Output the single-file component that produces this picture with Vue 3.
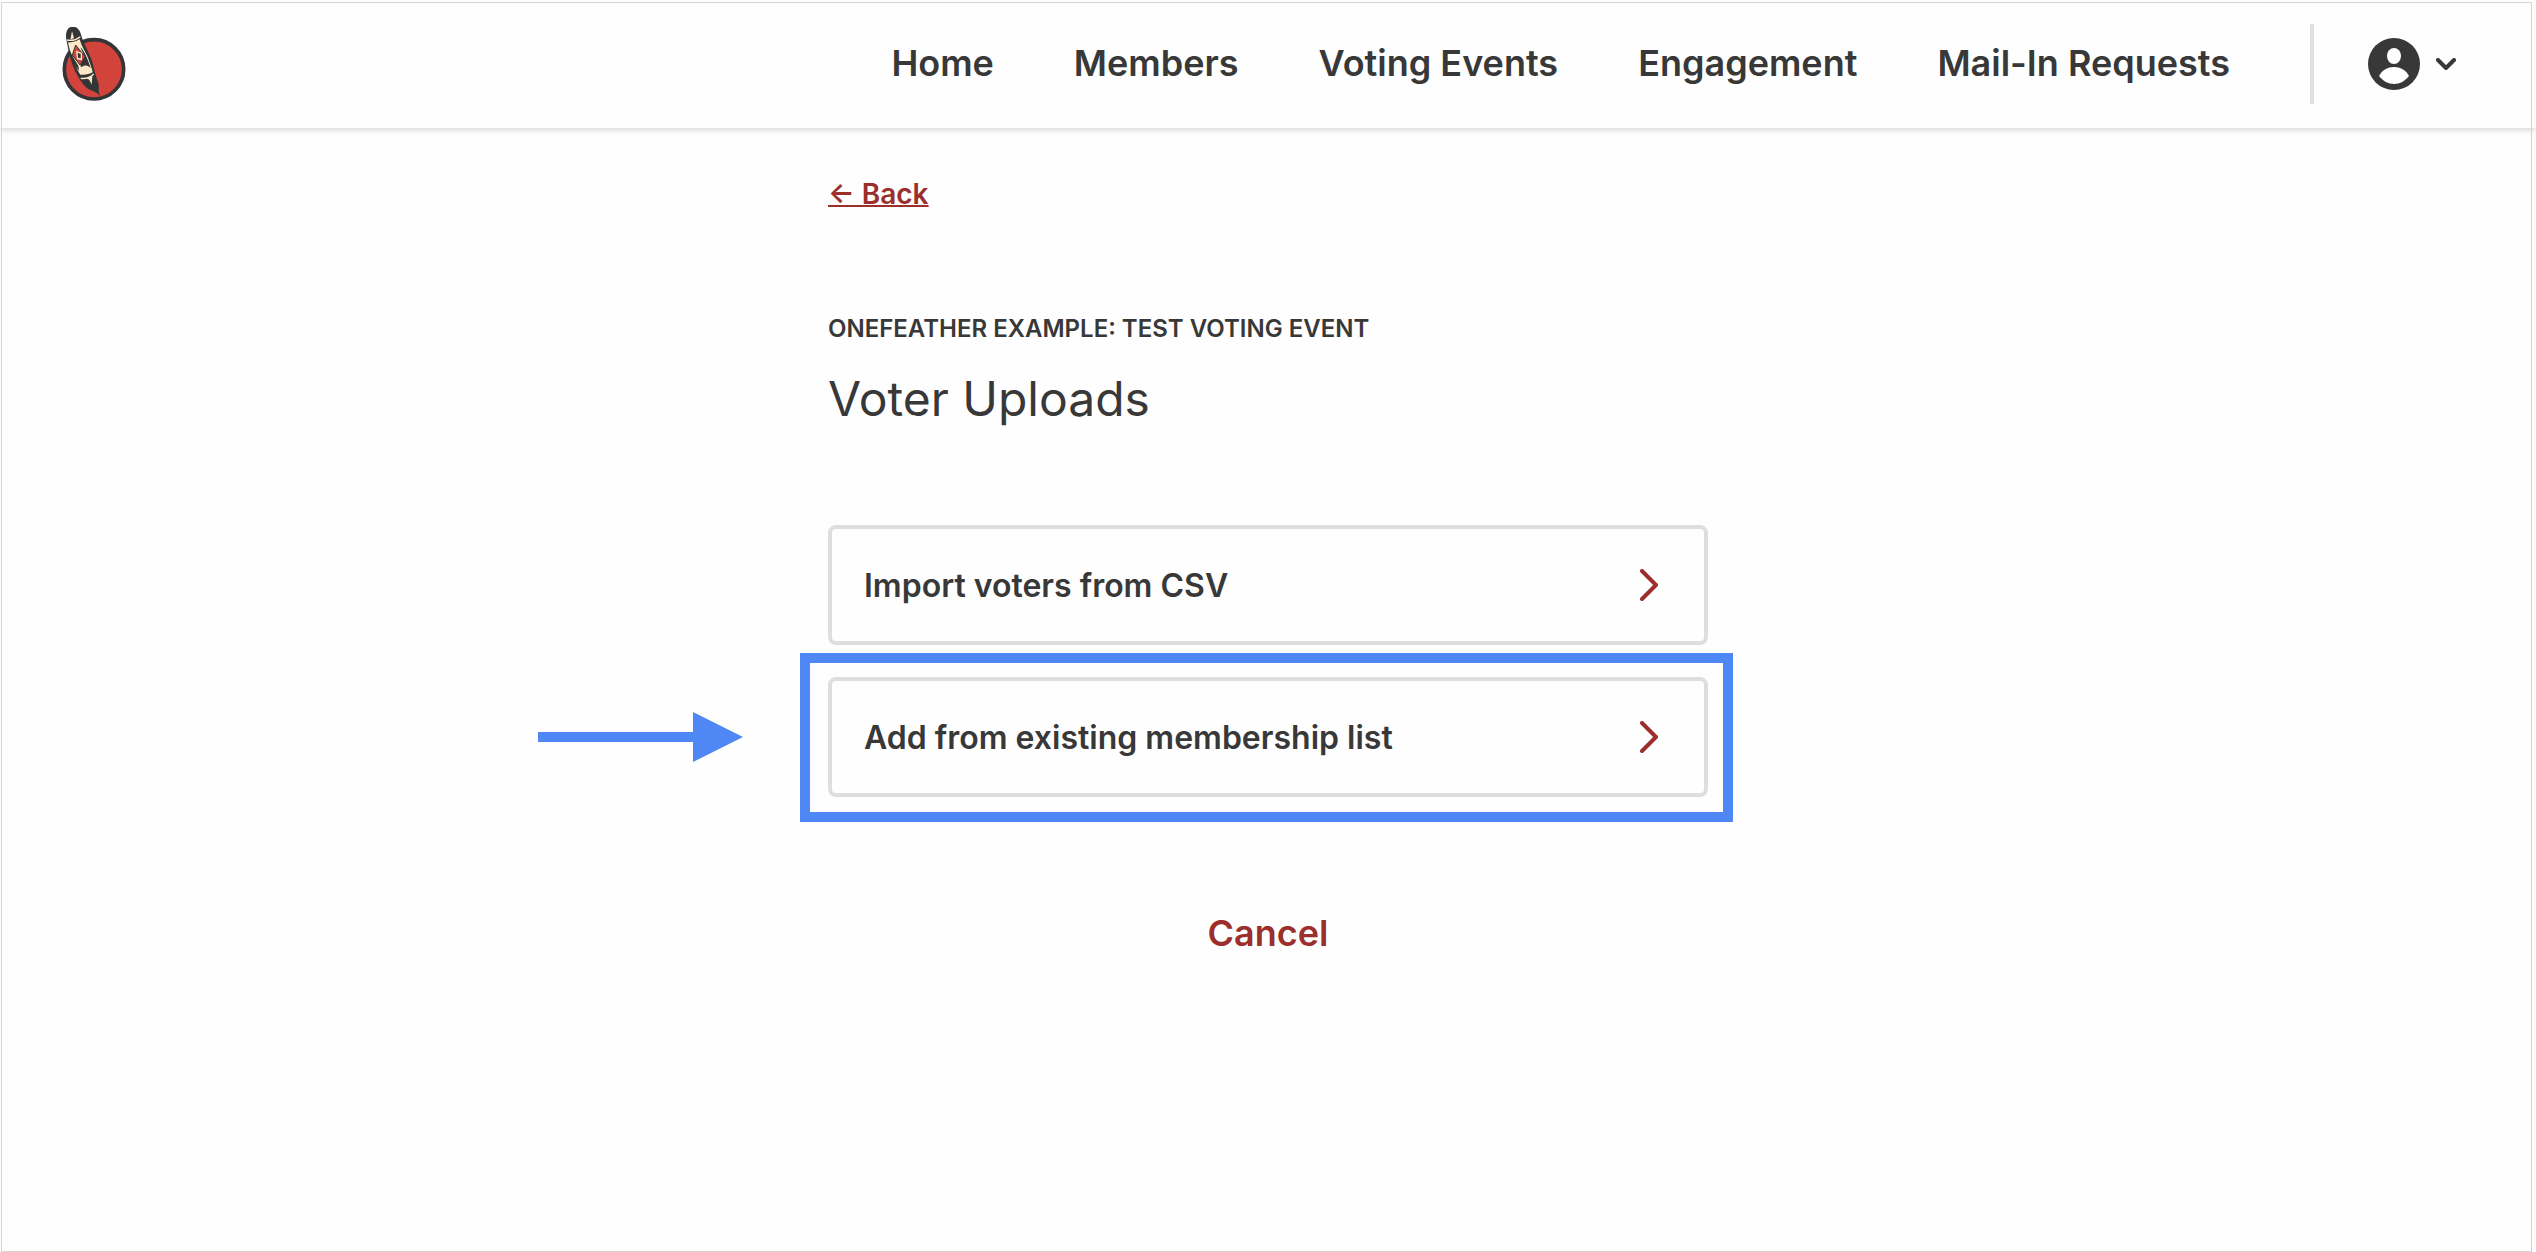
<script setup>
const links = ['Home', 'Members', 'Voting Events', 'Engagement', 'Mail-In Requests']
const options = [
  { label: 'Import voters from CSV', highlighted: false },
  { label: 'Add from existing membership list', highlighted: true },
]
</script>

<template>
  <div class="page">
    <header class="topbar">
      <a href="#" class="logo" aria-label="OneFeather home">
        <svg viewBox="35 37 192 225" width="64" height="75" aria-hidden="true">
          <circle cx="131" cy="164" r="89" fill="#d2433b" stroke="#343536" stroke-width="11" />
          <path d="M50 84C44 64 46 38 66 36C84 36 90 50 94 66C101 90 117 113 126 142C133 168 136 185 144 204C147 216 143 227 149 244C138 231 127 230 115 224C101 215 91 199 80 180C65 153 56 119 50 84Z" fill="#343536" />
          <path d="M53 83C64 84 78 81 88 74C93 95 107 112 115 135C121 152 126 165 127 173C117 179 103 182 90 180C75 156 60 121 53 83Z" fill="#fbe8c8" />
          <path d="M65 50L71 70L60 75Z" fill="#fbe8c8" />
          <path d="M50 76C62 79 77 76 90 66" fill="none" stroke="#fbe8c8" stroke-width="4" />
          <path d="M56 104L68 127L84 153L86 168C72 154 61 131 56 104Z" fill="#343536" />
          <path d="M90 98C103 108 114 139 121 160C112 151 104 150 92 158L90 151L103 126Z" fill="#343536" />
          <path d="M76 91L104 126L89 151L66 121Z" fill="#d2433b" stroke="#343536" stroke-width="3" />
          <path d="M77 108L95 115L95 137L80 134Z" fill="#fbe8c8" />
          <path d="M82 114L91 118L91 131L83 129Z" fill="#343536" />
          <path d="M91 191C106 193 120 188 130 178" fill="none" stroke="#fbe8c8" stroke-width="4" />
          <path d="M108 190C116 193 120 199 124 210L126 183Z" fill="#fbe8c8" />
        </svg>
      </a>
      <nav class="links" aria-label="Main">
        <a v-for="link in links" :key="link" href="#">{{ link }}</a>
      </nav>
      <button class="account" type="button" aria-label="Account menu">
        <svg viewBox="0 0 52 52" width="52" height="52" aria-hidden="true">
          <circle cx="26" cy="26" r="26" fill="#383838" />
          <ellipse cx="26" cy="18" rx="7" ry="8" fill="#fff" />
          <path d="M11 38C14 32 20 29 26 29S38 32 41 38C37 43 32 46 26 46S15 43 11 38Z" fill="#fff" />
        </svg>
        <svg viewBox="0 0 20 12" width="20" height="12" aria-hidden="true">
          <path d="M2 2L10 10L18 2" fill="none" stroke="#383838" stroke-width="4" stroke-linecap="round" stroke-linejoin="round" />
        </svg>
      </button>
    </header>

    <main class="content">
      <a href="#" class="back">← Back</a>
      <p class="eyebrow">ONEFEATHER EXAMPLE: TEST VOTING EVENT</p>
      <h1>Voter Uploads</h1>
      <ul class="options">
        <li v-for="option in options" :key="option.label">
          <button class="option" type="button">
            <span>{{ option.label }}</span>
            <svg viewBox="0 0 18 32" width="18" height="32" aria-hidden="true">
              <path d="M2 2L16 16L2 30" fill="none" stroke="#9b2f2b" stroke-width="4" stroke-linecap="round" stroke-linejoin="round" />
            </svg>
          </button>
          <template v-if="option.highlighted">
            <div class="highlight"></div>
            <svg class="pointer" viewBox="0 0 205 50" width="205" height="50" aria-hidden="true">
              <path d="M0 20H155V0L205 25L155 50V30H0Z" fill="#4f87f5" />
            </svg>
          </template>
        </li>
      </ul>
      <button class="cancel" type="button">Cancel</button>
    </main>
    <div class="frame"></div>
  </div>
</template>

<style>
body {
  background: #fefefe;
}
</style>

<style scoped>
.page {
  position: relative;
  min-height: 100vh;
  color: #383838;
  font-family: Inter, "Liberation Sans", sans-serif;
  font-weight: 600;
}

.frame {
  position: absolute;
  inset: 2px 4px 0 1px;
  border: 1px solid #d4d4d4;
  pointer-events: none;
}

.topbar {
  display: flex;
  align-items: center;
  box-sizing: border-box;
  height: 128px;
  padding: 0 80px 0 62px;
  box-shadow: 0 2px 6px rgba(0, 0, 0, 0.16);
}

.logo {
  display: flex;
  margin-right: auto;
}

.links {
  display: flex;
  gap: 80px;
  padding: 0 80px 2px 0;
}

.links a {
  color: inherit;
  font-size: 36px;
  line-height: 44px;
  text-decoration: none;
}

button {
  font: inherit;
  color: inherit;
  background: none;
  border: 0;
  padding: 0;
  cursor: pointer;
}

.account {
  display: flex;
  align-items: center;
  gap: 16px;
  height: 80px;
  padding-left: 54px;
  border-left: 4px solid #dedede;
}

.content {
  display: flex;
  flex-direction: column;
  align-items: flex-start;
  width: 880px;
  max-width: 100%;
  margin: 0 auto;
  padding: 48px 0;
}

.back {
  color: #9b2f2b;
  font-size: 28px;
  line-height: 36px;
  text-decoration-thickness: 2px;
}

.eyebrow {
  margin: 101px 0 0;
  font-size: 24px;
  line-height: 32px;
}

h1 {
  margin: 24px 0 0;
  font-size: 48px;
  font-weight: 400;
  line-height: 60px;
}

.options {
  display: flex;
  flex-direction: column;
  gap: 32px;
  width: 100%;
  margin: 96px 0 0;
  padding: 0;
  list-style: none;
}

.options li {
  position: relative;
}

.option {
  display: flex;
  align-items: center;
  justify-content: space-between;
  box-sizing: border-box;
  width: 100%;
  height: 120px;
  padding: 0 46px 0 32px;
  border: 4px solid #dedede;
  border-radius: 8px;
  font-size: 32px;
  text-align: left;
}

.highlight {
  position: absolute;
  inset: -24px -25px -25px -28px;
  border: 10px solid #4f87f5;
  pointer-events: none;
}

.pointer {
  position: absolute;
  top: 35px;
  right: calc(100% + 85px);
}

.cancel {
  align-self: center;
  margin-top: 112px;
  color: #9b2f2b;
  font-size: 36px;
  line-height: 48px;
}
</style>
